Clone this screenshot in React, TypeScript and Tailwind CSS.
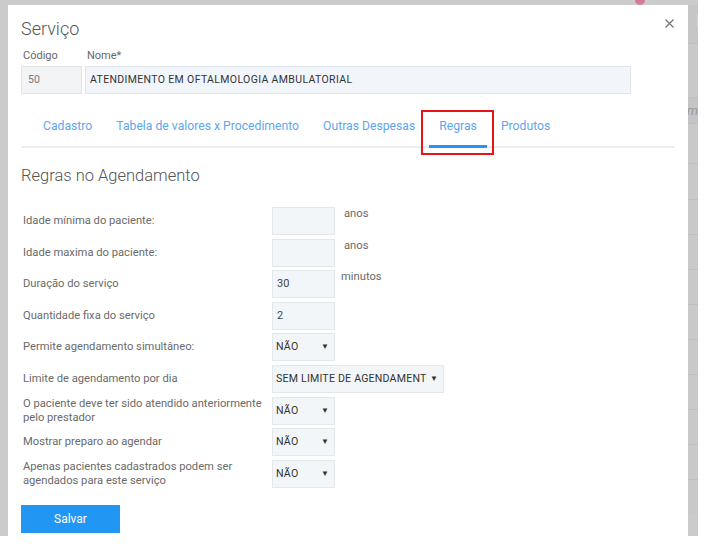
import React from 'react';

const FONT = { fontFamily: 'Roboto, "Liberation Sans", Arial, sans-serif' };

const TABS = ['Cadastro', 'Tabela de valores x Procedimento', 'Outras Despesas', 'Regras', 'Produtos'];

// alturas das linhas da tabela que aparece atrás do modal
const BG_ROWS = [36, 35, 35, 35, 35, 35, 35, 35, 35, 35];

function Caret() {
  return <span className="shrink-0 text-[8px] text-[#333] leading-none">▼</span>;
}

function Box({ value }: { value?: string }) {
  return (
    <div className="h-[28px] w-[63px] shrink-0 bg-[#f3f6f9] border border-[#e4e8ec] flex items-center pl-[4px] text-[11px] text-[#444]">
      {value}
    </div>
  );
}

function Select({ value, wide }: { value: string; wide?: boolean }) {
  return (
    <div
      className={`h-[28px] ${wide ? 'w-[172px]' : 'w-[63px]'} shrink-0 bg-[#f3f6f9] border border-[#e4e8ec] flex items-center gap-[3px] pl-[3px] pr-[5px] text-[10.6px] text-[#333]`}
    >
      <span className="flex-1 min-w-0 overflow-hidden whitespace-nowrap tracking-[0.2px]">{value}</span>
      <Caret />
    </div>
  );
}

function Row({ label, children, unit, unitGap }: { label: React.ReactNode; children: React.ReactNode; unit?: string; unitGap?: string }) {
  return (
    <div className="flex items-center">
      <div className="w-[251px] pl-[2px] text-[11.2px] leading-[14px] text-[#6a6a6a]">{label}</div>
      {children}
      {unit && <span className={`self-start ${unitGap} text-[11.2px] text-[#6a6a6a] leading-[14px]`}>{unit}</span>}
    </div>
  );
}

export default function App() {
  return (
    <div className="w-[705px] h-[551px] bg-white overflow-hidden" style={FONT}>
      <div className="relative w-[698px] h-[536px] bg-[#cbcbcb] flex pt-[5px] pl-[8px] overflow-hidden">
        {/* badge da página ao fundo */}
        <div className="absolute left-[635px] top-[-5px] w-[10px] h-[10px] rounded-full bg-[#d17b96]" />

        <div className="w-[680px] h-[560px] bg-white shrink-0 px-[13px] pt-[12px]">
          {/* cabeçalho */}
          <div className="flex items-start justify-between">
            <h1 className="text-[18px] font-light text-[#555] leading-[24px]">Serviço</h1>
            <svg width="9" height="9" viewBox="0 0 9 9" className="mt-[2px] mr-[1px]">
              <path d="M0.5 0.5L8.5 8.5M8.5 0.5L0.5 8.5" stroke="#777" strokeWidth="1.3" />
            </svg>
          </div>

          <div className="flex gap-[3px] mt-[8px]">
            <div>
              <div className="text-[11px] text-[#666] leading-[14px] pl-[2px]">Código</div>
              <div className="mt-[3px] w-[61px] h-[28px] bg-[#f3f4f5] border border-[#e2e4e6] flex items-center pl-[6px] text-[10.5px] text-[#777]">
                50
              </div>
            </div>
            <div>
              <div className="text-[11px] text-[#666] leading-[14px] pl-[2px]">Nome*</div>
              <div className="mt-[3px] w-[546px] h-[28px] bg-[#f2f5fa] border border-[#dfe6f0] flex items-center pl-[4px] text-[10.5px] text-[#333] tracking-[0.35px]">
                ATENDIMENTO EM OFTALMOLOGIA AMBULATORIAL
              </div>
            </div>
          </div>

          {/* abas */}
          <div className="flex pl-[12px] mt-[14px] border-b-2 border-[#eeeeee]">
            {TABS.map((t) => {
              const active = t === 'Regras';
              return (
                <div
                  key={t}
                  className={`relative px-[10px] pt-[10px] pb-[11px] mr-[4px] -mb-[2px] border-b-[3px] text-[12.2px] leading-[16px] text-[#5fa6ee] ${
                    active ? 'border-[#2196f3]' : 'border-transparent'
                  }`}
                >
                  {t}
                  {active && (
                    <div className="absolute left-[-8px] right-[-7px] top-[2px] bottom-[-10px] border-2 border-[#e8141b]" />
                  )}
                </div>
              );
            })}
          </div>

          <h2 className="mt-[17px] text-[16.5px] font-light text-[#555] leading-[22px]">Regras no Agendamento</h2>

          <div className="mt-[20px] flex flex-col gap-[3.6px]">
            <Row label="Idade mínima do paciente:" unit="anos" unitGap="ml-[9px]">
              <Box />
            </Row>
            <Row label="Idade maxima do paciente:" unit="anos" unitGap="ml-[9px]">
              <Box />
            </Row>
            <Row label="Duração do serviço" unit="minutos" unitGap="ml-[6px]">
              <Box value="30" />
            </Row>
            <Row label="Quantidade fixa do serviço">
              <Box value="2" />
            </Row>
            <Row label="Permite agendamento simultâneo:">
              <Select value="NÃO" />
            </Row>
            <Row label="Limite de agendamento por dia">
              <Select value="SEM LIMITE DE AGENDAMENTO" wide />
            </Row>
            <Row label={<>O paciente deve ter sido atendido anteriormente<br />pelo prestador</>}>
              <Select value="NÃO" />
            </Row>
            <Row label="Mostrar preparo ao agendar">
              <Select value="NÃO" />
            </Row>
            <Row label={<>Apenas pacientes cadastrados podem ser<br />agendados para este serviço</>}>
              <Select value="NÃO" />
            </Row>
          </div>

          <button className="mt-[17px] w-[99px] h-[28px] bg-[#2196f3] text-white text-[12px]">Salvar</button>
        </div>

        {/* fundo à direita */}
        <div className="w-[10px] shrink-0 flex flex-col overflow-hidden">
          <div className="h-[38px] bg-[#c6c6c6] flex justify-end pt-[9px]">
            <div className="w-[1px] h-[13px] bg-[#d6d6d6]" />
          </div>
          <div className="h-[54px] border-t border-[#bfbfbf] bg-[#c9c9c9]" />
          <div className="h-[26px] border-t border-[#bfbfbf] bg-[#c4c4c4] flex items-center">
            <span className="text-[13px] italic text-[#9a9a9a] leading-none -ml-[1px]">m</span>
          </div>
          <div className="h-[40px] border-t border-[#bfbfbf] bg-[#c9c9c9]" />
          {BG_ROWS.map((h, i) => (
            <div key={i} style={{ height: h }} className="border-t border-[#bfbfbf] bg-[#c9c9c9]" />
          ))}
        </div>
      </div>
    </div>
  );
}
